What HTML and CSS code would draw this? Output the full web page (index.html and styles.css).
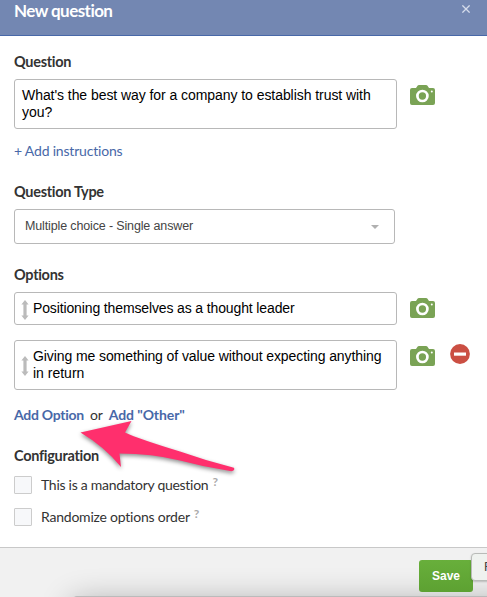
FILE: index.html
```
<!DOCTYPE html>
<html lang="en">
<head>
<meta charset="utf-8">
<title>New question</title>
<link rel="stylesheet" href="styles.css">
</head>
<body>
<svg class="sprite">
  <symbol id="camera" viewBox="0 0 25 20">
    <path fill="#7aa355" d="M2 3h4l1.500-2.200Q8 0 9 0h7q1 0 1.500.8L19 3h4q2 0 2 2v13q0 2-2 2H2q-2 0-2-2V5q0-2 2-2z"/>
    <circle cx="12.4" cy="11" r="5" fill="none" stroke="#fff" stroke-width="2.7"/>
    <circle cx="21.8" cy="6.5" r="1" fill="#fff"/>
  </symbol>
  <symbol id="drag" viewBox="0 0 8 20">
    <path fill="#bbb" d="M4 0l3.600 4.500H5.600v11h2L4 20 .4 15.500h2v-11h-2z"/>
  </symbol>
</svg>
<div class="modal">
  <div class="header">
    <span class="title">New question</span>
    <svg class="close" viewBox="0 0 8 8"><path d="M.4.4l7.200 7.200M7.600.4L.4 7.600"/></svg>
  </div>
  <div class="content">
    <div class="label">Question</div>
    <div class="row">
      <div class="field tall question"><span class="l1">What's the best way for a company to establish trust with</span><br>you?</div>
      <svg class="camera"><use href="#camera"/></svg>
    </div>
    <a class="instructions">+ Add instructions</a>
    <div class="label">Question Type</div>
    <div class="select"><span>Multiple choice - Single answer</span><i class="caret"></i></div>
    <div class="label">Options</div>
    <div class="row">
      <div class="field option"><svg class="drag"><use href="#drag"/></svg><span class="o1">Positioning themselves as a thought leader</span></div>
      <svg class="camera"><use href="#camera"/></svg>
    </div>
    <div class="row second">
      <div class="field tall option"><svg class="drag"><use href="#drag"/></svg><span><span class="o2">Giving me something of value without expecting anything</span><br>in return</span></div>
      <svg class="camera"><use href="#camera"/></svg>
      <svg class="remove" viewBox="0 0 20 20"><circle cx="10" cy="10" r="9.9" fill="#cb4f43"/><path fill="#fff" d="M4 8.500h12v3.200H4z"/></svg>
    </div>
    <div class="links"><a class="add">Add Option</a><span class="or">or</span><a>Add "Other"</a></div>
    <div class="label">Configuration</div>
    <div class="check"><i class="box"></i><span class="c1">This is a mandatory question</span><sup>?</sup></div>
    <div class="check"><i class="box"></i><span class="c2">Randomize options order</span><sup>?</sup></div>
  </div>
  <div class="footer">
    <div class="shade"></div>
    <button class="save">Save</button>
    <div class="tip">F</div>
  </div>
  <svg class="arrow" viewBox="0 0 170 80"><path d="M3.500 27.500L54.500 16 48 27.500Q62 34 103 46.500 130 56 156 62.500Q158 63 157 65Q156 66.500 153 66Q127 62 103 55.500 75 48.500 42.500 48.500L44 62Q28 42 3.500 27.500z"/></svg>
</div>
</body>
</html>
```
FILE: styles.css
```
body {
  margin: 0;
  background: #fff;
  color: #333;
  font-family: Lato, sans-serif;
  font-size: 14px;
  line-height: 20px;
}
.sprite {
  display: none;
}
.modal {
  position: relative;
  width: 487px;
  height: 597px;
  overflow: hidden;
  display: flex;
  flex-direction: column;
}
.header {
  box-sizing: border-box;
  height: 36px;
  padding: 1px 17px 0 14px;
  background: #7387b2;
  border-bottom: 1px solid #4868a8;
  color: #fff;
  display: flex;
  justify-content: space-between;
}
.title {
  font-size: 17px;
  font-weight: bold;
  letter-spacing: -0.55px;
}
.close {
  width: 8px;
  height: 8px;
  margin-top: 4px;
  fill: none;
  stroke: #d5dceb;
  stroke-width: 1.3;
}
.content {
  box-sizing: border-box;
  height: 511px;
  padding: 16px 14px 0;
}
.label {
  font-size: 14.5px;
  font-weight: bold;
  letter-spacing: -0.3px;
  margin-bottom: 7px;
}
.row {
  display: flex;
  align-items: flex-start;
}
.second {
  margin-top: 15px;
}
.field {
  box-sizing: border-box;
  width: 383px;
  height: 33px;
  border: 1px solid #b8b8b8;
  border-radius: 3px;
  color: #000;
  font: 14px/17px "Liberation Sans", Arial, sans-serif;
  white-space: nowrap;
}
.tall {
  height: 50px;
}
.question {
  padding: 7px;
}
.l1 {
  letter-spacing: -0.06px;
}
.o1 {
  letter-spacing: -0.13px;
}
.o2 {
  letter-spacing: -0.09px;
}
.option {
  display: flex;
  padding: 7px 6px;
}
.drag {
  width: 8px;
  height: 20px;
  margin-right: 4px;
}
.tall .drag {
  margin-top: 8px;
}
.camera {
  width: 25px;
  height: 20px;
  margin: 6px 0 0 13px;
}
.remove {
  width: 20px;
  height: 20px;
  margin: 4px 0 0 15px;
}
a {
  color: #4868a8;
}
.instructions {
  display: block;
  margin: 12px 0 21px;
  letter-spacing: -0.19px;
}
.select {
  box-sizing: border-box;
  width: 381px;
  height: 35px;
  padding: 0 15px 2px 10px;
  margin-bottom: 21px;
  border: 1px solid #b8b8b8;
  border-radius: 3px;
  color: #444;
  font: 12.5px "Liberation Sans", Arial, sans-serif;
  letter-spacing: -0.14px;
  display: flex;
  align-items: center;
  justify-content: space-between;
}
.caret {
  border: 4px solid transparent;
  border-top-color: #b0b0b0;
  border-bottom: 0;
  margin-top: 3px;
}
.links {
  margin: 15px 0 21px;
  font-weight: bold;
  letter-spacing: -0.1px;
}
.add {
  letter-spacing: -0.27px;
}
.or {
  font-weight: normal;
  margin: 0 6px;
}
.content .links + .label {
  margin-bottom: 10px;
}
.check {
  display: flex;
  align-items: center;
  height: 18px;
  margin-bottom: 14px;
}
.c1 {
  letter-spacing: -0.28px;
}
.c2 {
  letter-spacing: -0.22px;
}
.box {
  box-sizing: border-box;
  width: 18px;
  height: 18px;
  margin-right: 9px;
  border: 1px solid #ccc;
  border-radius: 1px;
  background: #f7f8fa;
}
sup {
  margin: -6px 0 0 4px;
  color: #aaa;
  font-size: 12px;
  line-height: 12px;
  font-weight: bold;
}
.footer {
  position: relative;
  box-sizing: border-box;
  height: 50px;
  padding: 12px 14px 0;
  border-top: 1px solid #c8c8c8;
  background: #f1f1f1;
  display: flex;
  justify-content: flex-end;
}
.save {
  position: relative;
  width: 54px;
  height: 32px;
  padding: 0;
  border: 0;
  border-radius: 3px;
  background: linear-gradient(#68af3b, #5da132);
  color: #fff;
  font: bold 12px "Liberation Sans", Arial, sans-serif;
}
/* window that starts just under the bottom edge */
.shade {
  position: absolute;
  left: 72px;
  right: -60px;
  top: 48px;
  height: 40px;
  background: #bbb;
  border-radius: 5px;
  box-shadow: 0 6px 32px rgba(0, 0, 0, 0.32);
}
.tip {
  position: absolute;
  box-sizing: border-box;
  left: 471px;
  top: 5px;
  width: 40px;
  height: 28px;
  padding-left: 12px;
  border: 1px solid #b9bbb8;
  border-radius: 4px;
  background: #eff2ef;
  color: #444;
  font: 13px/26px "Liberation Sans", Arial, sans-serif;
  box-shadow: 0 1px 2px rgba(0, 0, 0, 0.2);
}
.arrow {
  position: absolute;
  left: 77px;
  top: 405px;
  width: 170px;
  height: 80px;
  fill: #ff2f6d;
  filter: drop-shadow(0 2px 2px rgba(0, 0, 0, 0.45));
}
```
